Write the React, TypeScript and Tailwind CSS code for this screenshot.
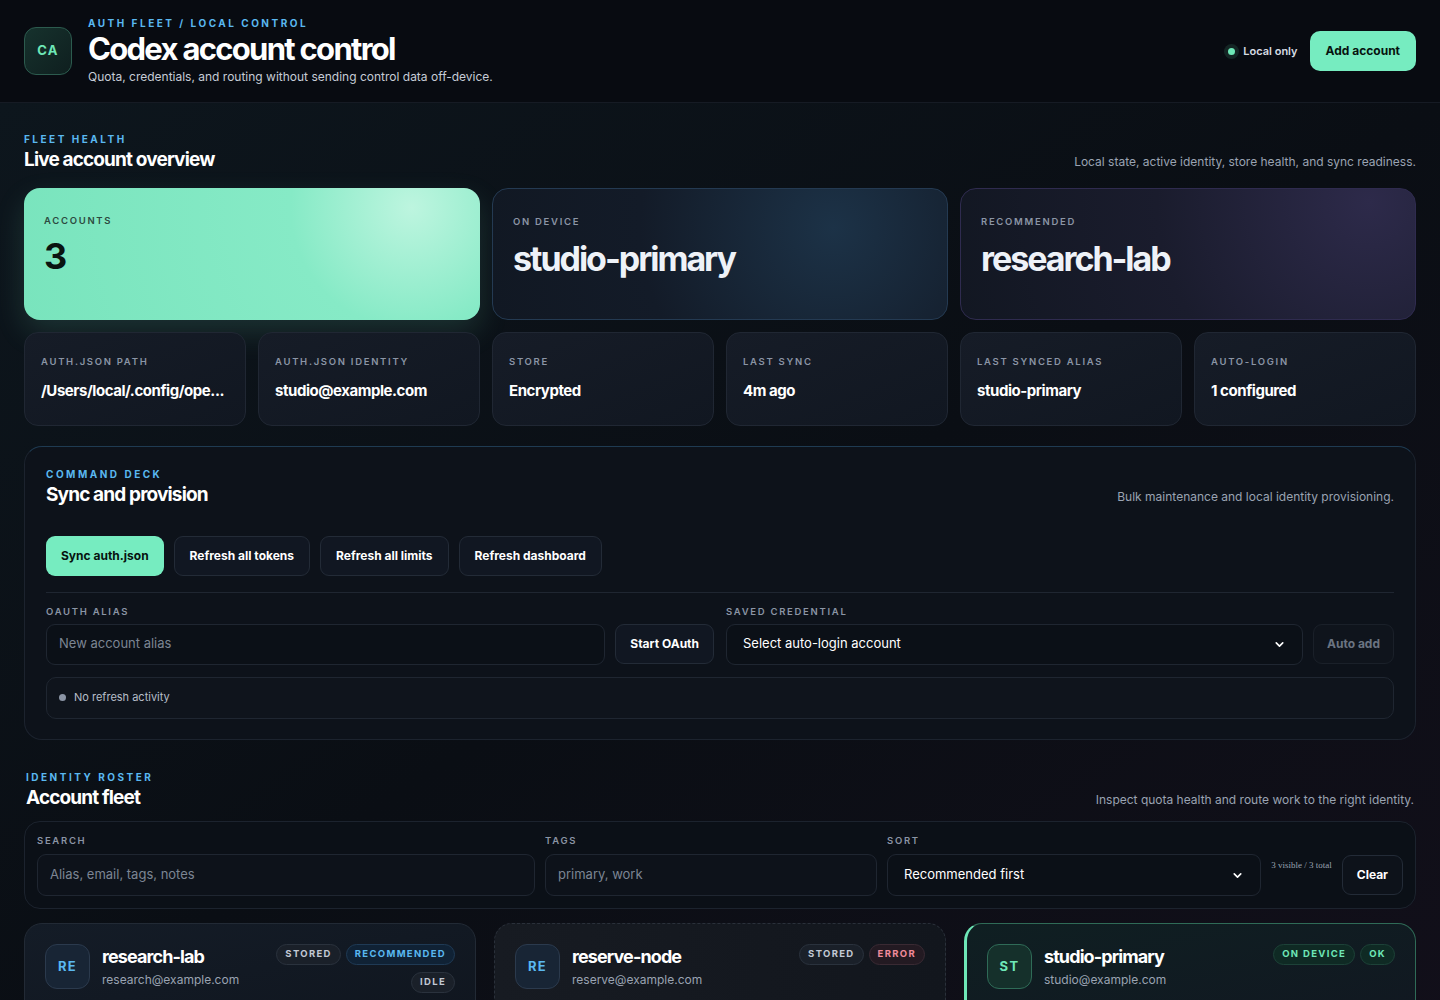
import { ChevronDown } from 'lucide-react'

const font = { fontFamily: 'Inter, "Noto Sans", sans-serif' }

function Eyebrow({ children }: { children: React.ReactNode }) {
  return <div className="text-[10px] font-bold tracking-[0.25em] text-[#5ab8f0] uppercase leading-none">{children}</div>
}

function Label({ children }: { children: React.ReactNode }) {
  return <div className="text-[9.5px] font-semibold tracking-[0.18em] text-[#8b95a5] uppercase leading-none">{children}</div>
}

function SectionHead({ eyebrow, title, note }: { eyebrow: string; title: string; note: string }) {
  return (
    <div className="flex items-end justify-between">
      <div>
        <Eyebrow>{eyebrow}</Eyebrow>
        <h2 className="mt-[4px] text-[19px] font-bold tracking-[-0.045em] text-white leading-6">{title}</h2>
      </div>
      <p className="text-[12px] text-[#9aa3b2] mb-[1px]">{note}</p>
    </div>
  )
}

const stats = [
  ['auth.json path', '/Users/local/.config/ope...'],
  ['auth.json identity', 'studio@example.com'],
  ['Store', 'Encrypted'],
  ['Last sync', '4m ago'],
  ['Last synced alias', 'studio-primary'],
  ['Auto-login', '1 configured'],
]

function Pill({ children, tone }: { children: React.ReactNode; tone: 'gray' | 'blue' | 'red' | 'green' }) {
  const cls = {
    gray: 'text-[#c2c9d4] bg-[#1a2029] border-[#2a323d]',
    blue: 'text-[#5ab8f0] bg-[#102235] border-[#1f3a55]',
    red: 'text-[#f08a9a] bg-[#231a22] border-[#3a2a33]',
    green: 'text-[#6ee7b7] bg-[#0f2a24] border-[#1d4238]',
  }[tone]
  return <span className={`px-2 h-[21px] inline-flex items-center rounded-full border text-[9.5px] font-bold tracking-[0.14em] ${cls}`}>{children}</span>
}

function AccountCard({ initials, name, email, pills, extra, active, dashed }: {
  initials: string; name: string; email: string; pills: [string, 'gray' | 'blue' | 'red' | 'green'][]; extra?: string; active?: boolean; dashed?: boolean
}) {
  return (
    <div className={`rounded-[18px] border px-5 pt-5 pb-6 ${active ? 'border-[#2f6b57] border-l-[3px] border-l-[#6ee7b7] bg-gradient-to-br from-[#0f1f22] to-[#111821]' : dashed ? 'border-dashed border-[#2a303a] bg-gradient-to-r from-[#171b22] to-[#12161d]' : 'border-[#222a35] bg-gradient-to-br from-[#141c27] to-[#10161f]'}`}>
      <div className="flex items-start gap-3">
        <div className={`w-[45px] h-[45px] rounded-[12px] border flex items-center justify-center text-[13px] font-bold tracking-[0.1em] ${active ? 'border-[#2f6b57] bg-[#15302b] text-[#6ee7b7]' : 'border-[#2b3a4d] bg-[#182535] text-[#5ab8f0]'}`}>{initials}</div>
        <div className="flex-1">
          <div className="text-[18px] font-bold tracking-[-0.05em] text-white leading-6 mt-[1px]">{name}</div>
          <div className="text-[12px] text-[#9aa3b2] mt-[2px]">{email}</div>
        </div>
        <div className="flex flex-col items-end gap-[7px]">
          <div className="flex gap-[5px]">{pills.map(([t, tone]) => <Pill key={t} tone={tone}>{t}</Pill>)}</div>
          {extra && <Pill tone="gray">{extra}</Pill>}
        </div>
      </div>
    </div>
  )
}

export default function App() {
  return (
    <div style={font} className="min-h-screen bg-[#090c12] text-white overflow-hidden h-[1000px]">
      <header className="h-[103px] border-b border-[#161b24] bg-[#080b11] px-6 flex items-center justify-between">
        <div className="flex items-center gap-4">
          <div className="w-[48px] h-[48px] rounded-[12px] border border-[#2c5b4e] bg-gradient-to-br from-[#16322d] to-[#0f1f1f] flex items-center justify-center text-[13px] font-bold tracking-[0.1em] text-[#6ee7b7]">CA</div>
          <div className="mt-[1px]">
            <Eyebrow>Auth fleet / local control</Eyebrow>
            <h1 className="text-[31px] font-bold tracking-[-0.055em] leading-[36px] mt-[3px]">Codex account control</h1>
            <p className="text-[12px] text-[#c6ccd6] mt-[1px]">Quota, credentials, and routing without sending control data off-device.</p>
          </div>
        </div>
        <div className="flex items-center gap-3">
          <div className="flex items-center gap-2 text-[11px] font-semibold text-[#d6dbe3]">
            <span className="w-[7px] h-[7px] rounded-full bg-[#6ee7b7] shadow-[0_0_0_4px_rgba(110,231,183,0.12)]" />
            Local only
          </div>
          <button className="h-[40px] px-4 rounded-[10px] bg-[#76ecc0] text-[#07130f] text-[12px] font-bold">Add account</button>
        </div>
      </header>

      <main className="px-6 bg-gradient-to-br from-[#0d161d] via-[#0a0e14] to-[#120f1a] pb-10">
        <section className="pt-[31px]">
          <SectionHead eyebrow="Fleet health" title="Live account overview" note="Local state, active identity, store health, and sync readiness." />
          <div className="grid grid-cols-3 gap-3 mt-[16px]">
            <div className="h-[132px] rounded-[16px] px-5 pt-7 bg-[radial-gradient(circle_at_85%_15%,#bdf5df_0%,#86eac6_30%,#79e4bd_100%)] shadow-[0_12px_30px_rgba(118,236,192,0.15)]">
              <Label><span className="text-[#2c4a3f]">Accounts</span></Label>
              <div className="text-[36px] font-bold text-[#0a1410] mt-[12px] leading-none">3</div>
            </div>
            <div className="h-[132px] rounded-[16px] px-5 pt-7 border border-[#243a52] bg-[radial-gradient(circle_at_75%_30%,#1c3247_0%,#131b28_55%,#111823_100%)]">
              <Label>On device</Label>
              <div className="text-[34px] font-bold tracking-[-0.06em] text-[#eef2f8] mt-[12px] leading-[40px]">studio-primary</div>
            </div>
            <div className="h-[132px] rounded-[16px] px-5 pt-7 border border-[#2f2b4f] bg-[radial-gradient(circle_at_90%_10%,#2d2a4a_0%,#1a1c2d_50%,#121722_100%)]">
              <Label>Recommended</Label>
              <div className="text-[34px] font-bold tracking-[-0.06em] text-[#eef2f8] mt-[12px] leading-[40px]">research-lab</div>
            </div>
          </div>
          <div className="grid grid-cols-6 gap-3 mt-3">
            {stats.map(([l, v]) => (
              <div key={l} className="h-[94px] rounded-[14px] border border-[#202733] bg-gradient-to-br from-[#161c27] to-[#111721] px-4 pt-6">
                <Label>{l}</Label>
                <div className="text-[15px] font-bold tracking-[-0.03em] text-white mt-[13px] truncate">{v}</div>
              </div>
            ))}
          </div>
        </section>

        <section className="mt-[20px] rounded-[18px] border border-[#1c232e] border-t-[#1f3b52] bg-[#0d121a] px-[21px] pt-[22px] pb-[20px]">
          <SectionHead eyebrow="Command deck" title="Sync and provision" note="Bulk maintenance and local identity provisioning." />
          <div className="flex gap-[10px] mt-[29px]">
            <button className="h-[40px] px-[15px] rounded-[9px] bg-[#76ecc0] text-[#07130f] text-[12px] font-bold">Sync auth.json</button>
            {['Refresh all tokens', 'Refresh all limits', 'Refresh dashboard'].map(t => (
              <button key={t} className="h-[40px] px-[15px] rounded-[9px] border border-[#232b37] bg-[#111722] text-[12px] font-bold text-white">{t}</button>
            ))}
          </div>
          <div className="border-t border-[#1f2631] mt-[16px] pt-[14px] grid grid-cols-2 gap-3">
            <div>
              <Label>OAuth alias</Label>
              <div className="flex gap-[10px] mt-[7px]">
                <div className="flex-1 h-[41px] rounded-[9px] border border-[#1f2631] bg-[#0b1017] px-3 flex items-center text-[13px] text-[#7c8593]">New account alias</div>
                <button className="h-[40px] px-[14px] rounded-[9px] border border-[#232b37] bg-[#111722] text-[12px] font-bold">Start OAuth</button>
              </div>
            </div>
            <div>
              <Label>Saved credential</Label>
              <div className="flex gap-[10px] mt-[7px]">
                <div className="flex-1 h-[41px] rounded-[9px] border border-[#1f2631] bg-[#0b1017] px-4 flex items-center justify-between text-[13px] text-white">
                  Select auto-login account <ChevronDown size={13} strokeWidth={3} />
                </div>
                <button className="h-[40px] px-[13px] rounded-[9px] border border-[#1a2029] bg-[#0f141c] text-[12px] font-bold text-[#6b7482]">Auto add</button>
              </div>
            </div>
          </div>
          <div className="mt-[12px] h-[42px] rounded-[10px] border border-[#1f2631] bg-[#0f141c] px-3 flex items-center gap-2 text-[11px] text-[#b7bec9]">
            <span className="w-[7px] h-[7px] rounded-full bg-[#8b95a5]" />
            No refresh activity
          </div>
        </section>

        <section className="mt-[32px]">
          <div className="px-[2px]">
            <SectionHead eyebrow="Identity roster" title="Account fleet" note="Inspect quota health and route work to the right identity." />
          </div>
          <div className="mt-[11px] rounded-[16px] border border-[#1c232e] bg-[#0b1017] px-3 pt-[14px] pb-3 flex items-end gap-[10px]">
            <div className="w-[498px]">
              <Label>Search</Label>
              <div className="mt-[9px] h-[42px] rounded-[9px] border border-[#1f2631] bg-[#0d121a] px-3 flex items-center text-[13px] text-[#7c8593]">Alias, email, tags, notes</div>
            </div>
            <div className="w-[332px]">
              <Label>Tags</Label>
              <div className="mt-[9px] h-[42px] rounded-[9px] border border-[#1f2631] bg-[#0d121a] px-3 flex items-center text-[13px] text-[#7c8593]">primary, work</div>
            </div>
            <div className="flex-1">
              <Label>Sort</Label>
              <div className="mt-[9px] h-[42px] rounded-[9px] border border-[#1f2631] bg-[#0b1017] px-4 flex items-center justify-between text-[13px] text-white">
                Recommended first <ChevronDown size={13} strokeWidth={3} />
              </div>
            </div>
            <div className="self-end h-[42px] pt-[5px] text-[9px] text-[#9aa3b2]" style={{ fontFamily: '"Liberation Serif", serif' }}>3 visible / 3 total</div>
            <button className="h-[40px] mb-[1px] px-[14px] rounded-[9px] border border-[#232b37] bg-[#0d121a] text-[12px] font-bold">Clear</button>
          </div>
          <div className="grid grid-cols-3 gap-[18px] mt-[14px]">
            <AccountCard initials="RE" name="research-lab" email="research@example.com" pills={[['STORED', 'gray'], ['RECOMMENDED', 'blue']]} extra="IDLE" />
            <AccountCard initials="RE" name="reserve-node" email="reserve@example.com" pills={[['STORED', 'gray'], ['ERROR', 'red']]} dashed />
            <AccountCard initials="ST" name="studio-primary" email="studio@example.com" pills={[['ON DEVICE', 'green'], ['OK', 'green']]} active />
          </div>
        </section>
      </main>
    </div>
  )
}
